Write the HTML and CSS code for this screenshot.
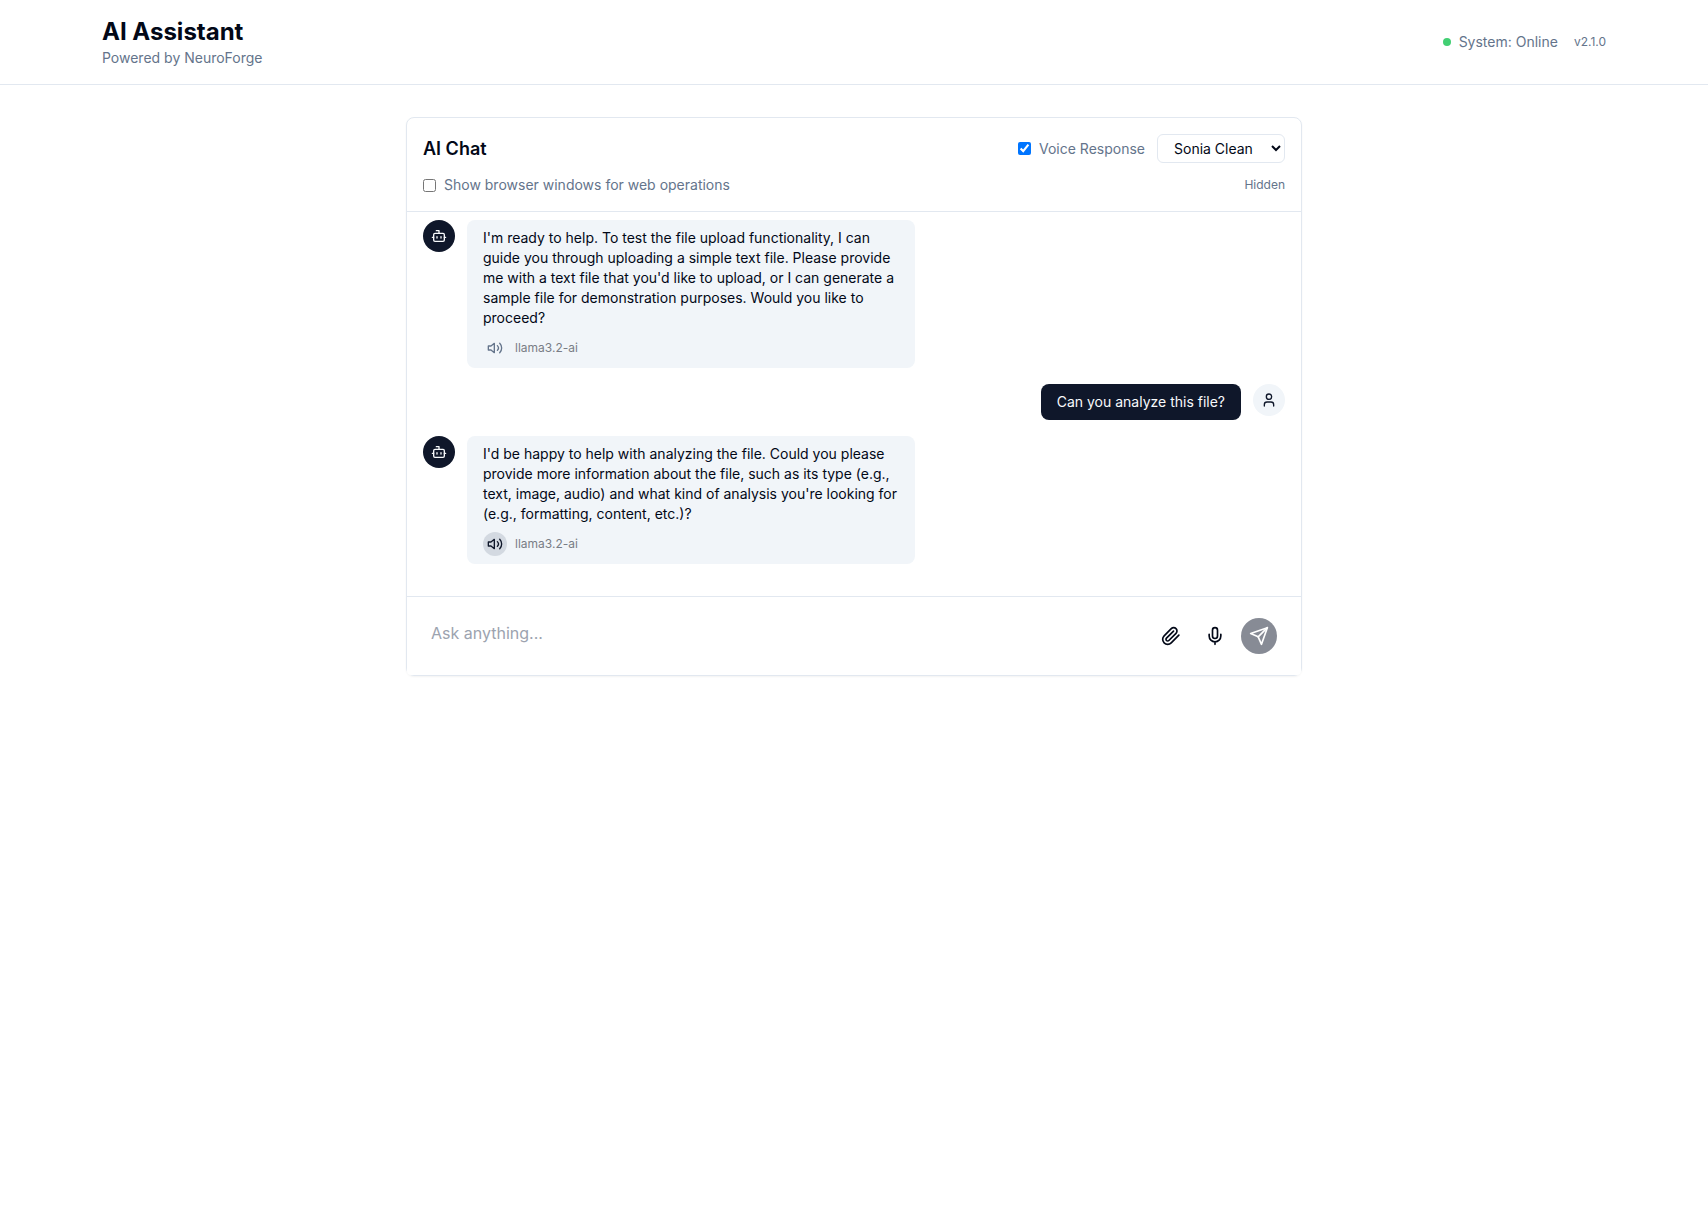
FILE: index.html
```html
<!DOCTYPE html>
<html lang="en">
<head>
<meta charset="utf-8">
<meta name="viewport" content="width=device-width, initial-scale=1">
<title>AI Assistant</title>
<link rel="stylesheet" href="styles.css">
</head>
<body>
<svg class="sprite" aria-hidden="true">
  <symbol id="bot" viewBox="0 0 24 24"><path d="M12 8V4H8"/><rect width="16" height="12" x="4" y="8" rx="2"/><path d="M2 14h2M20 14h2M15 13v2M9 13v2"/></symbol>
  <symbol id="user" viewBox="0 0 24 24"><path d="M19 21v-2a4 4 0 0 0-4-4H9a4 4 0 0 0-4 4v2"/><circle cx="12" cy="7" r="4"/></symbol>
  <symbol id="volume" viewBox="0 0 24 24"><path d="M11 5 6 9H2v6h4l5 4z"/><path d="M15.54 8.46a5 5 0 0 1 0 7.07M19.07 4.93a10 10 0 0 1 0 14.14"/></symbol>
  <symbol id="clip" viewBox="0 0 24 24"><path d="m21.44 11.05-9.19 9.19a6 6 0 0 1-8.49-8.49l8.57-8.57A4 4 0 1 1 18 8.84l-8.59 8.57a2 2 0 0 1-2.83-2.83l8.49-8.48"/></symbol>
  <symbol id="mic" viewBox="0 0 24 24"><path d="M12 2a3 3 0 0 0-3 3v7a3 3 0 0 0 6 0V5a3 3 0 0 0-3-3Z"/><path d="M19 10v2a7 7 0 0 1-14 0v-2M12 19v3"/></symbol>
  <symbol id="send" viewBox="0 0 24 24"><path d="m22 2-7 20-4-9-9-4Z"/><path d="M22 2 11 13"/></symbol>
</svg>

<header class="site-header">
  <div class="site-header-inner">
    <div>
      <h1 class="brand">AI Assistant</h1>
      <p class="tagline">Powered by NeuroForge</p>
    </div>
    <div class="status">
      <span class="status-state"><span class="dot"></span>System: Online</span>
      <span class="small">v2.1.0</span>
    </div>
  </div>
</header>

<main class="page">
  <section class="card">
    <div class="card-header">
      <div class="row">
        <h2 class="card-title">AI Chat</h2>
        <div class="voice">
          <label class="check"><input type="checkbox" checked>Voice Response</label>
          <select class="voice-select" aria-label="Voice"><option>Sonia Clean</option></select>
        </div>
      </div>
      <div class="row">
        <label class="check"><input type="checkbox">Show browser windows for web operations</label>
        <span class="small">Hidden</span>
      </div>
    </div>

    <div class="messages">
      <article class="message">
        <span class="avatar avatar-bot"><svg class="icon"><use href="#bot"/></svg></span>
        <div class="bubble">
          <p>I'm ready to help. To test the file upload functionality, I can guide you through uploading a simple text file. Please provide me with a text file that you'd like to upload, or I can generate a sample file for demonstration purposes. Would you like to proceed?</p>
          <div class="meta"><button class="speak" type="button" aria-label="Play message"><svg class="icon"><use href="#volume"/></svg></button><span class="model">llama3.2-ai</span></div>
        </div>
      </article>
      <article class="message message-user">
        <div class="bubble">
          <p>Can you analyze this file?</p>
        </div>
        <span class="avatar"><svg class="icon"><use href="#user"/></svg></span>
      </article>
      <article class="message">
        <span class="avatar avatar-bot"><svg class="icon"><use href="#bot"/></svg></span>
        <div class="bubble">
          <p>I'd be happy to help with analyzing the file. Could you please provide more information about the file, such as its type (e.g., text, image, audio) and what kind of analysis you're looking for (e.g., formatting, content, etc.)?</p>
          <div class="meta"><button class="speak speak-active" type="button" aria-label="Play message"><svg class="icon"><use href="#volume"/></svg></button><span class="model">llama3.2-ai</span></div>
        </div>
      </article>
    </div>

    <form class="composer">
      <textarea class="prompt" rows="1" placeholder="Ask anything..." aria-label="Message"></textarea>
      <button class="action" type="button" aria-label="Attach file"><svg class="icon icon-lg"><use href="#clip"/></svg></button>
      <button class="action" type="button" aria-label="Record voice"><svg class="icon icon-lg"><use href="#mic"/></svg></button>
      <button class="action send" type="submit" aria-label="Send" disabled><svg class="icon icon-lg"><use href="#send"/></svg></button>
    </form>
  </section>
</main>
</body>
</html>
```
FILE: styles.css
```css
:root {
  --ink: #020817;
  --navy: #0f172a;
  --muted: #64748b;
  --line: #e2e8f0;
  --soft: #f1f5f9;
}

* {
  box-sizing: border-box;
}

body {
  margin: 0;
  background: #fff;
  color: var(--ink);
  font: 14px/20px Inter, "Liberation Sans", sans-serif;
}

h1, h2, p {
  margin: 0;
}

button, select, textarea {
  font: inherit;
  color: inherit;
}

.sprite {
  display: none;
}

.icon {
  display: block;
  width: 16px;
  height: 16px;
  fill: none;
  stroke: currentColor;
  stroke-width: 2;
  stroke-linecap: round;
  stroke-linejoin: round;
}

.icon-lg {
  width: 20px;
  height: 20px;
}

.site-header {
  border-bottom: 1px solid var(--line);
}

.site-header-inner {
  display: flex;
  align-items: center;
  justify-content: space-between;
  max-width: 1536px;
  margin: 0 auto;
  padding: 16px;
}

.brand {
  font-size: 24px;
  line-height: 32px;
  font-weight: 700;
}

.tagline {
  color: var(--muted);
}

.status {
  display: flex;
  align-items: center;
  gap: 16px;
  color: var(--muted);
}

.status-state {
  display: flex;
  align-items: center;
  gap: 8px;
}

.dot {
  width: 8px;
  height: 8px;
  border-radius: 50%;
  background: #42cf73;
}

.small {
  font-size: 12px;
  line-height: 16px;
  color: var(--muted);
}

.page {
  max-width: 896px;
  margin: 32px auto;
}

.card {
  border: 1px solid var(--line);
  border-radius: 8px;
  box-shadow: 0 1px 2px rgb(0 0 0 / 5%);
}

.card-header {
  display: flex;
  flex-direction: column;
  gap: 12px;
  padding: 16px;
  border-bottom: 1px solid var(--line);
}

.row {
  display: flex;
  align-items: center;
  justify-content: space-between;
}

.card-title {
  font-size: 18px;
  line-height: 28px;
  font-weight: 600;
}

.voice {
  display: flex;
  align-items: center;
  gap: 12px;
}

.check {
  display: flex;
  align-items: center;
  gap: 8px;
  color: var(--muted);
}

.check input {
  width: 13px;
  height: 13px;
  margin: 0;
}

.voice-select {
  width: 128px;
  height: 29px;
  padding: 4px 12px;
  border: 1px solid var(--line);
  border-radius: 6px;
  background: #fff;
}

.messages {
  display: flex;
  flex-direction: column;
  gap: 16px;
  padding: 8px 16px 32px;
}

.message {
  display: flex;
  align-items: flex-start;
  gap: 12px;
}

.message-user {
  justify-content: flex-end;
}

.avatar {
  display: grid;
  flex: none;
  place-items: center;
  width: 32px;
  height: 32px;
  border-radius: 50%;
  background: var(--soft);
  color: var(--navy);
}

.avatar-bot {
  background: var(--navy);
  color: #f8fafc;
}

.bubble {
  max-width: 448px;
  padding: 8px 16px;
  border-radius: 8px;
  background: var(--soft);
}

.message-user .bubble {
  background: var(--navy);
  color: #f8fafc;
}

.meta {
  display: flex;
  align-items: center;
  gap: 8px;
  margin-top: 8px;
}

.speak {
  display: grid;
  place-items: center;
  width: 24px;
  height: 24px;
  padding: 0;
  border: 0;
  border-radius: 50%;
  background: transparent;
  color: var(--muted);
}

.speak-active {
  background: #d3d9e1;
  color: var(--navy);
}

.model {
  font-size: 12px;
  line-height: 16px;
  color: #797d86;
}

.composer {
  display: flex;
  align-items: center;
  gap: 8px;
  padding: 16px 24px;
  border-top: 1px solid var(--line);
  border-radius: 0 0 4px 4px;
  background: #fff;
}

.prompt {
  flex: 1;
  min-width: 0;
  height: 46px;
  padding: 8px 0;
  border: 0;
  outline: 0;
  resize: none;
  background: transparent;
  font-size: 16px;
  line-height: 24px;
}

.prompt::placeholder {
  color: #9ca3af;
}

.action {
  display: grid;
  flex: none;
  place-items: center;
  width: 36px;
  height: 36px;
  padding: 0;
  border: 0;
  border-radius: 50%;
  background: transparent;
}

.send {
  background: #878b95;
  color: #fff;
}
```
